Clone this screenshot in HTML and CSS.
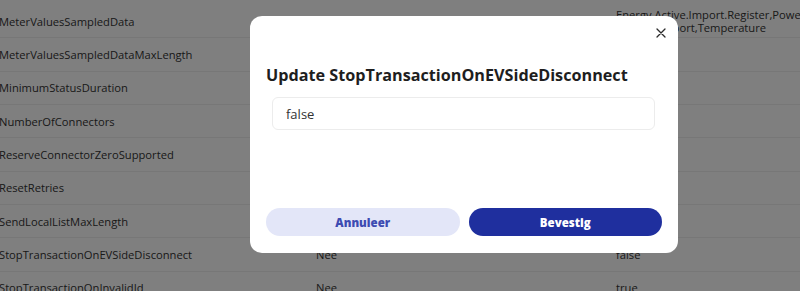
FILE: index.html
```html
<!DOCTYPE html>
<html lang="en">
<head>
    <meta charset="UTF-8">
    <meta name="viewport" content="width=device-width, initial-scale=1.0">
    <title>Configuratie</title>
    <link rel="stylesheet" href="styles.css">
</head>
<body>
    <div class="config-table">
        <div class="row">
            <div class="cell key">MeterValuesSampledData</div>
            <div class="cell">Nee</div>
            <div class="cell value">Energy.Active.Import.Register,Power.Active.Import,<br>Current.Import,Temperature</div>
        </div>
        <div class="row">
            <div class="cell key">MeterValuesSampledDataMaxLength</div>
            <div class="cell">Nee</div>
            <div class="cell value">4</div>
        </div>
        <div class="row">
            <div class="cell key">MinimumStatusDuration</div>
            <div class="cell">Nee</div>
            <div class="cell value">0</div>
        </div>
        <div class="row">
            <div class="cell key">NumberOfConnectors</div>
            <div class="cell">Ja</div>
            <div class="cell value">1</div>
        </div>
        <div class="row">
            <div class="cell key">ReserveConnectorZeroSupported</div>
            <div class="cell">Ja</div>
            <div class="cell value">false</div>
        </div>
        <div class="row">
            <div class="cell key">ResetRetries</div>
            <div class="cell">Nee</div>
            <div class="cell value">3</div>
        </div>
        <div class="row">
            <div class="cell key">SendLocalListMaxLength</div>
            <div class="cell">Ja</div>
            <div class="cell value">100</div>
        </div>
        <div class="row">
            <div class="cell key">StopTransactionOnEVSideDisconnect</div>
            <div class="cell">Nee</div>
            <div class="cell value">false</div>
        </div>
        <div class="row">
            <div class="cell key">StopTransactionOnInvalidId</div>
            <div class="cell">Nee</div>
            <div class="cell value">true</div>
        </div>
    </div>

    <div class="overlay">
        <div class="modal">
            <button class="modal-close" onclick="closeModal()" aria-label="Sluiten">
                <svg width="10" height="10" viewBox="0 0 10 10">
                    <path d="M1 1L9 9M9 1L1 9" stroke="#2b2b2b" stroke-width="1.3" stroke-linecap="round"/>
                </svg>
            </button>
            <h2 class="modal-title">Update StopTransactionOnEVSideDisconnect</h2>
            <div class="field">
                <input type="text" id="value" value="false">
            </div>
            <div class="actions">
                <button class="btn btn-cancel" onclick="closeModal()">Annuleer</button>
                <button class="btn btn-confirm" onclick="confirmValue()">Bevestig</button>
            </div>
        </div>
    </div>

    <script>
        const overlay = document.querySelector('.overlay');

        function closeModal() {
            overlay.style.display = 'none';
        }

        function confirmValue() {
            const value = document.getElementById('value').value;
            console.log('StopTransactionOnEVSideDisconnect =', value);
            closeModal();
        }
    </script>
</body>
</html>
```

FILE: styles.css
```css
* {
    margin: 0;
    padding: 0;
    box-sizing: border-box;
    font-family: "Open Sans", sans-serif;
}

body {
    background-color: #fff;
    color: #333;
    overflow: hidden;
    height: 291px;
}

.config-table {
    margin-top: 5px;
    margin-left: -1px;
    width: 1000px;
}

.row {
    display: grid;
    grid-template-columns: 317px 300px 1fr;
    align-items: center;
    height: 33.33px;
    border-bottom: 1px solid #efefef;
    font-size: 11.2px;
}

.cell {
    white-space: nowrap;
}

.cell.value {
    line-height: 13px;
}

.overlay {
    position: fixed;
    inset: 0;
    background-color: rgba(0, 0, 0, 0.5);
    display: flex;
    justify-content: center;
    align-items: center;
    padding-left: 128px;
    padding-bottom: 22px;
}

.modal {
    position: relative;
    width: 428px;
    background-color: #fff;
    border-radius: 12px;
    padding: 47px 16px 17px;
}

.modal-close {
    position: absolute;
    top: 12px;
    right: 12px;
    width: 10px;
    height: 10px;
    border: none;
    background: none;
    cursor: pointer;
    display: flex;
}

.modal-title {
    font-size: 16.2px;
    font-weight: 700;
    line-height: 24px;
    color: #1e1e1e;
}

.field {
    margin: 10px 7px 0 6px;
}

.field input {
    width: 100%;
    height: 33px;
    border: 1px solid #ececec;
    border-radius: 6px;
    padding: 0 13px;
    font-size: 13px;
    color: #333;
    outline: none;
}

.actions {
    margin-top: 78px;
    display: grid;
    grid-template-columns: 1fr 1fr;
    gap: 9px;
}

.btn {
    height: 28px;
    border: none;
    border-radius: 14px;
    font-size: 11.5px;
    font-weight: 800;
    cursor: pointer;
}

.btn-cancel {
    background-color: #e3e6f8;
    color: #3d4bb2;
}

.btn-confirm {
    background-color: #1f2f9e;
    color: #fff;
}
```
